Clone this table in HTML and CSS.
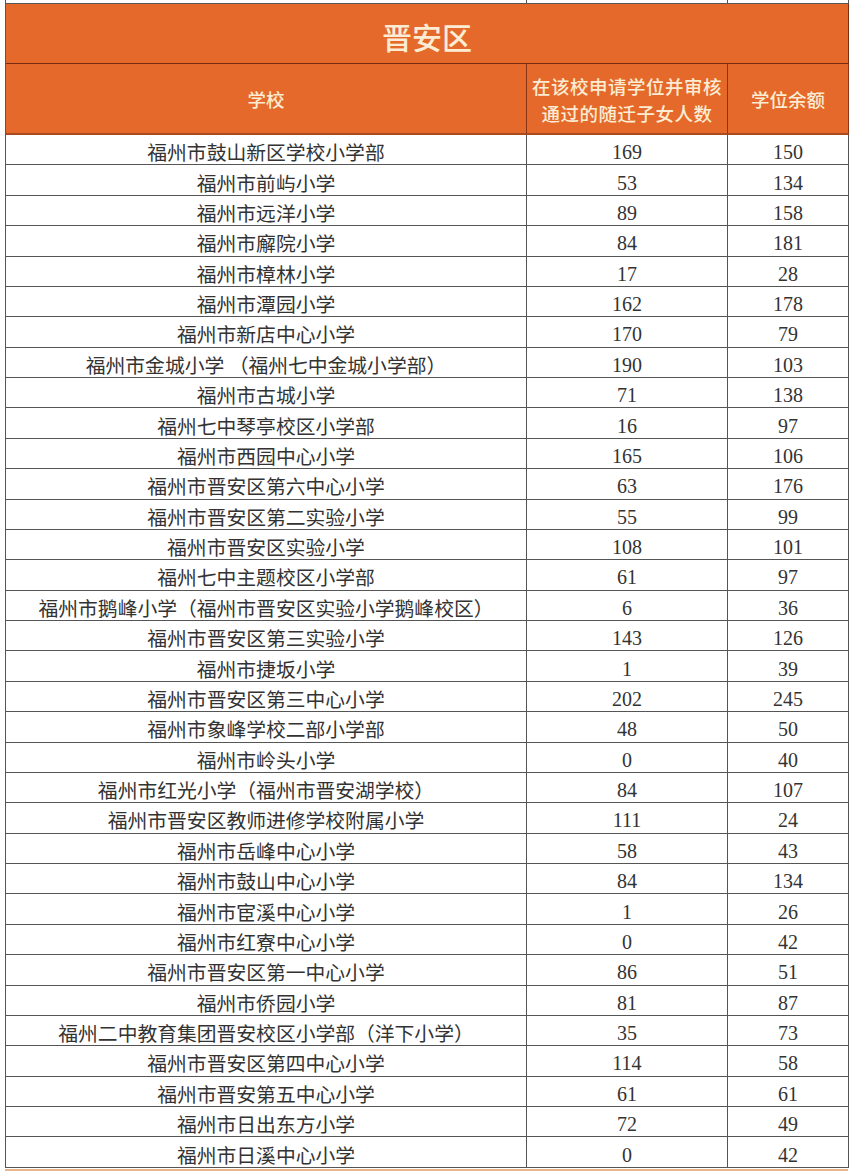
FILE: index.html
```html
<!DOCTYPE html>
<html lang="zh-CN">
<head>
<meta charset="utf-8">
<title>晋安区</title>
<link rel="stylesheet" href="styles.css">
</head>
<body>
<div class="sheet">
  <div class="strip"></div><div class="strip"></div><div class="strip"></div>
  <div class="title">晋安区</div>
  <div class="head">学校</div>
  <div class="head head-two">在该校申请学位并审核<br>通过的随迁子女人数</div>
  <div class="head">学位余额</div>

  <div class="name">福州市鼓山新区学校小学部</div><div class="num">169</div><div class="num">150</div>
  <div class="name">福州市前屿小学</div><div class="num">53</div><div class="num">134</div>
  <div class="name">福州市远洋小学</div><div class="num">89</div><div class="num">158</div>
  <div class="name">福州市廨院小学</div><div class="num">84</div><div class="num">181</div>
  <div class="name">福州市樟林小学</div><div class="num">17</div><div class="num">28</div>
  <div class="name">福州市潭园小学</div><div class="num">162</div><div class="num">178</div>
  <div class="name">福州市新店中心小学</div><div class="num">170</div><div class="num">79</div>
  <div class="name">福州市金城小学 （福州七中金城小学部）</div><div class="num">190</div><div class="num">103</div>
  <div class="name">福州市古城小学</div><div class="num">71</div><div class="num">138</div>
  <div class="name">福州七中琴亭校区小学部</div><div class="num">16</div><div class="num">97</div>
  <div class="name">福州市西园中心小学</div><div class="num">165</div><div class="num">106</div>
  <div class="name">福州市晋安区第六中心小学</div><div class="num">63</div><div class="num">176</div>
  <div class="name">福州市晋安区第二实验小学</div><div class="num">55</div><div class="num">99</div>
  <div class="name">福州市晋安区实验小学</div><div class="num">108</div><div class="num">101</div>
  <div class="name">福州七中主题校区小学部</div><div class="num">61</div><div class="num">97</div>
  <div class="name">福州市鹅峰小学（福州市晋安区实验小学鹅峰校区）</div><div class="num">6</div><div class="num">36</div>
  <div class="name">福州市晋安区第三实验小学</div><div class="num">143</div><div class="num">126</div>
  <div class="name">福州市捷坂小学</div><div class="num">1</div><div class="num">39</div>
  <div class="name">福州市晋安区第三中心小学</div><div class="num">202</div><div class="num">245</div>
  <div class="name">福州市象峰学校二部小学部</div><div class="num">48</div><div class="num">50</div>
  <div class="name">福州市岭头小学</div><div class="num">0</div><div class="num">40</div>
  <div class="name">福州市红光小学（福州市晋安湖学校）</div><div class="num">84</div><div class="num">107</div>
  <div class="name">福州市晋安区教师进修学校附属小学</div><div class="num">111</div><div class="num">24</div>
  <div class="name">福州市岳峰中心小学</div><div class="num">58</div><div class="num">43</div>
  <div class="name">福州市鼓山中心小学</div><div class="num">84</div><div class="num">134</div>
  <div class="name">福州市宦溪中心小学</div><div class="num">1</div><div class="num">26</div>
  <div class="name">福州市红寮中心小学</div><div class="num">0</div><div class="num">42</div>
  <div class="name">福州市晋安区第一中心小学</div><div class="num">86</div><div class="num">51</div>
  <div class="name">福州市侨园小学</div><div class="num">81</div><div class="num">87</div>
  <div class="name">福州二中教育集团晋安校区小学部（洋下小学）</div><div class="num">35</div><div class="num">73</div>
  <div class="name">福州市晋安区第四中心小学</div><div class="num">114</div><div class="num">58</div>
  <div class="name">福州市晋安第五中心小学</div><div class="num">61</div><div class="num">61</div>
  <div class="name">福州市日出东方小学</div><div class="num">72</div><div class="num">49</div>
  <div class="name">福州市日溪中心小学</div><div class="num">0</div><div class="num">42</div>
</div>
<div class="next"></div>
</body>
</html>
```
FILE: styles.css
```css
html, body {
  margin: 0;
  padding: 0;
  background: #ffffff;
}

.sheet {
  margin-left: 5px;
  width: 843px;
  display: grid;
  grid-template-columns: 521px 201px 121px;
  border-left: 1px solid #555;
  box-sizing: border-box;
}

.sheet > div {
  box-sizing: border-box;
  border-right: 1px solid #555;
  border-bottom: 1px solid #555;
  display: flex;
  align-items: center;
  justify-content: center;
  text-align: center;
}

.strip {
  height: 4px;
  background: #fff;
}

.sheet > .title {
  grid-column: 1 / 4;
  height: 60px;
  background: #e4692a;
  color: #fbecd3;
  font-family: "Noto Sans CJK SC", sans-serif;
  font-size: 30px;
  font-weight: 500;
  padding-top: 5px;
  letter-spacing: 0;
  border-bottom: 1px solid #7a2c10;
  border-right: 1px solid #7a2c10;
}

.sheet > .head {
  height: 71px;
  background: #e4692a;
  color: #fbecd3;
  font-family: "Noto Sans CJK SC", sans-serif;
  font-size: 18.5px;
  font-weight: 500;
  line-height: 27px;
  border-right: 1px solid #8a3516;
  border-bottom: 2px solid #a94a1f;
  padding-top: 2px;
}

.sheet > .head-two {
  letter-spacing: 0.5px;
}

.sheet > .name,
.sheet > .num {
  height: 30.38px;
  color: #333;
  background: #fff;
}

.sheet > .name {
  font-family: "Noto Sans CJK SC", sans-serif;
  font-size: 19.8px;
  padding-top: 4px;
}

.sheet > .num {
  font-family: "Liberation Serif", serif;
  font-size: 20px;
  padding-top: 6px;
}

.next {
  margin-left: 5px;
  width: 843px;
  height: 40px;
  margin-top: 1px;
  background: #e8b48f;
}
```
